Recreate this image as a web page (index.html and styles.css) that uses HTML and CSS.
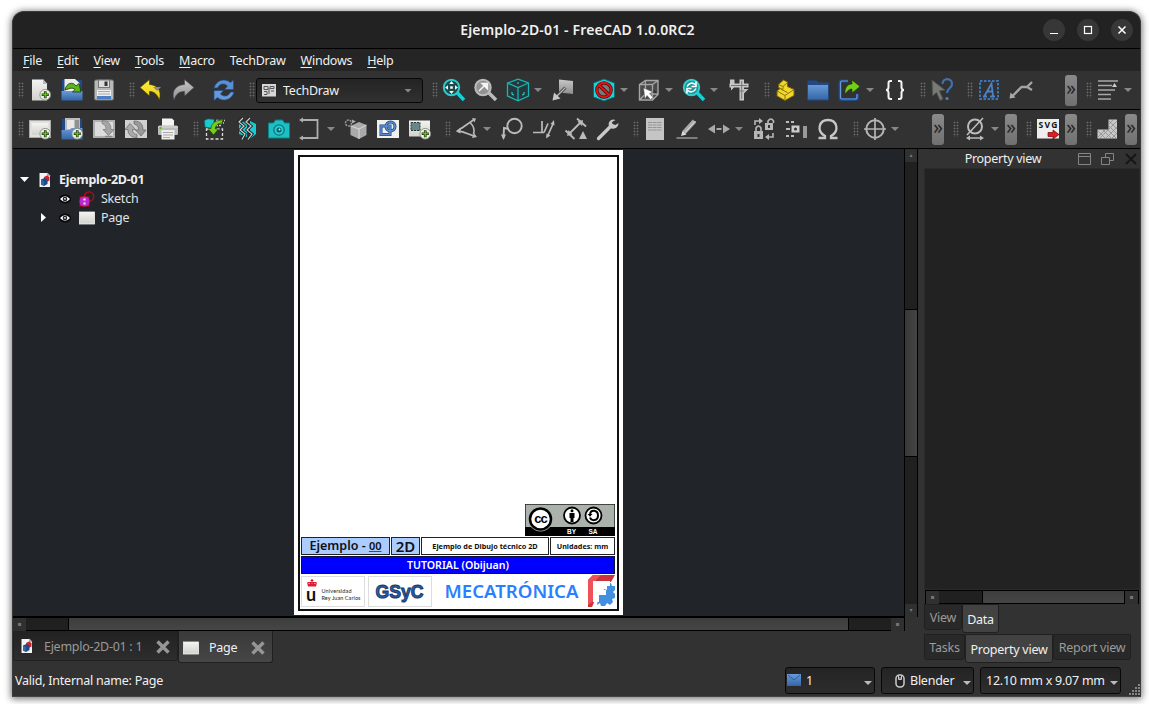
FILE: index.html
```html
<!DOCTYPE html>
<html lang="en">
<head>
<meta charset="utf-8">
<title>Ejemplo-2D-01 - FreeCAD 1.0.0RC2</title>
<link rel="stylesheet" href="styles.css">
</head>
<body>
<svg class="defs" width="0" height="0">
  <defs>
    <linearGradient id="gy" x2="0" y2="1"><stop stop-color="#fce94f"/><stop offset="1" stop-color="#edd400"/></linearGradient>
    <linearGradient id="gb" x2="0" y2="1"><stop stop-color="#6a9bd8"/><stop offset="1" stop-color="#3465a4"/></linearGradient>
    <linearGradient id="gw" x2="0" y2="1"><stop stop-color="#f4f4f2"/><stop offset="1" stop-color="#d0d2cc"/></linearGradient>
    <linearGradient id="gg" x2="0" y2="1"><stop stop-color="#c8c8c8"/><stop offset="1" stop-color="#8e8e8e"/></linearGradient>
    <symbol id="plus" viewBox="0 0 14 14"><circle cx="7" cy="7" r="6" fill="#eef0ec" stroke="#888a85" stroke-width="1"/><path d="M7 3v8M3 7h8" stroke="#173604" stroke-width="3"/><path d="M7 3.600v6.800M3.600 7h6.800" stroke="#73d216" stroke-width="1.300"/></symbol>
    <symbol id="doc" viewBox="0 0 12 16"><path d="M.5 1h8L11 3.500V15H.5z" fill="#f4f4f4"/><path d="M8 .5l3.500 3.500H8z" fill="#aaa"/><path d="M5 5l3-1.500 2.500 1.500v3.500l-3 1.500-2.500-2z" fill="#d4202a"/><path d="M2 7.500l3.500-1.500L8.500 7.500v4.500l-3.500 2-3-1.500z" fill="#204a87"/><path d="M2 7.500L5 9v5l-3-1.500z" fill="#3465a4"/></symbol>
    <symbol id="eye" viewBox="0 0 12 10"><ellipse cx="6" cy="5" rx="6" ry="4.500" fill="#08090a"/><path d="M1 5q5-5.500 10 0q-5 5.500-10 0z" fill="#fff"/><circle cx="6" cy="5" r="2.300" fill="#222"/><circle cx="6" cy="4.800" r=".9" fill="#fff"/></symbol>
    <symbol id="pageicon" viewBox="0 0 16 14"><rect x=".5" y="1" width="15" height="12" fill="url(#gw)" stroke="#f4f4f4" stroke-width=".8"/></symbol>
    <symbol id="close" viewBox="0 0 14 14"><path d="M1.500 1.500l11 11M12.500 1.500l-11 11" stroke="#969696" stroke-width="3.400"/></symbol>
  </defs>
</svg>
<div class="window">
  <header class="titlebar">
    <span class="title">Ejemplo-2D-01 - FreeCAD 1.0.0RC2</span>
    <div class="winbtns">
      <span class="wb"><svg width="10" height="10"><path d="M1 8.500h8" stroke="#fff" stroke-width="1.200"/></svg></span>
      <span class="wb"><svg width="10" height="10"><rect x="1.500" y="1.500" width="7" height="7" fill="none" stroke="#fff" stroke-width="1.200"/></svg></span>
      <span class="wb"><svg width="10" height="10"><path d="M1.500 1.500l7 7M8.500 1.500l-7 7" stroke="#fff" stroke-width="1.500"/></svg></span>
    </div>
  </header>
  <nav class="menu">
    <span><u>F</u>ile</span><span><u>E</u>dit</span><span><u>V</u>iew</span><span><u>T</u>ools</span><span><u>M</u>acro</span><span>TechDraw</span><span><u>W</u>indows</span><span><u>H</u>elp</span>
  </nav>

  <div class="toolbar">
    <i class="grip first"></i>
    <svg class="ic" viewBox="0 0 24 24"><path d="M4 1.500h11l4 4v17H4z" fill="url(#gw)"/><path d="M15 1l4 5h-4z" fill="#b8b9b5"/><use href="#plus" x="11" y="10.500" width="12.500" height="12.500"/></svg>
    <svg class="ic" viewBox="0 0 24 24"><path d="M2 2h20v20H2z" fill="#204a87"/><path d="M4.500 1h10.500l4.500 4v9h-15z" fill="#eee"/><path d="M1.500 13h21v9.500h-21z" fill="url(#gb)"/><path d="M5 12c1-7 8-9 11-4l3-2.500 2 8.500h-8.500l2.500-2.500c-3-2.500-5-1-10 .5z" fill="#5cb61a" stroke="#173604" stroke-width=".8"/></svg>
    <svg class="ic" viewBox="0 0 24 24"><rect x="2.500" y="2" width="19" height="20" rx="1.500" fill="#b8b8b8" stroke="#777"/><rect x="6.500" y="2" width="11" height="7.500" fill="#ddd" stroke="#777"/><rect x="12.500" y="3.500" width="3" height="4.500" fill="#333"/><rect x="5" y="12" width="14" height="9" fill="#eee"/><path d="M6 13.500h12M6 16h12" stroke="#aaa"/><path d="M5 18h14v3H5z" fill="#4a7fc4"/></svg>
    <i class="grip"></i>
    <svg class="ic" viewBox="0 0 24 24"><path d="M1 9.500L10.500 1.500v5C18 7 23 12 20.500 22 18 16 15 13.500 10.500 13.500V18z" fill="url(#gy)" stroke="#4b4205" stroke-width=".7"/><path d="M14 9h8l-4 4z" fill="#8b8b8b"/></svg>
    <svg class="ic" viewBox="0 0 24 24"><path d="M23 9.500L13.500 1.500v5C5 7 0 13 3 22 5.500 15.500 8 13.500 13.500 13.500V18z" fill="url(#gg)" stroke="#444" stroke-width=".6"/></svg>
    <svg class="ic sep" viewBox="0 0 24 24"><path d="M2 10C4 2 13-.5 18.500 4.500L21.500 2v9.500H12.500l3-3.500c-4-3.500-8-2-10 2z" fill="#5b8fd3" stroke="#204a87" stroke-width=".7"/><path d="M22 14c-2 8-11 10.500-16.500 5.500L2 22.500V12.500h9.500l-3 3.500c4 3.500 8 2 10-2z" fill="#6699d8" stroke="#204a87" stroke-width=".7"/></svg>
    <i class="grip"></i>
    <div class="workbench"><svg width="14" height="13" viewBox="0 0 14 13"><rect width="14" height="12.500" fill="#d6d6d6"/><path d="M2 2.500h4v3H2zM8 2.500h4v2H8zM2 7.500h3v3H2M7 4v6M9 7h3" fill="none" stroke="#555"/></svg><span>TechDraw</span><b class="tri"></b></div>
    <i class="grip"></i>
    <svg class="ic" viewBox="0 0 24 24"><path d="M15 14.500l7 7.500" stroke="#16d0d2" stroke-width="3.500"/><circle cx="9.500" cy="9.500" r="7.700" fill="#20494c" stroke="#2cc9cb" stroke-width="2"/><path d="M9.500 3l2.300 3H7.200zM9.500 16l2.300-3H7.200zM3 9.500l3-2.300v4.600zM16 9.500l-3-2.300v4.600zM8.200 8.200h2.600v2.600H8.200z" fill="#e8ffff"/></svg>
    <svg class="ic" viewBox="0 0 24 24"><path d="M14.500 14.500l7.500 7.500" stroke="#bbb" stroke-width="3.500"/><circle cx="9" cy="9.500" r="7.700" fill="#929292" stroke="#bbb" stroke-width="2"/><path d="M5 13l5-5M8 5.500h5.500V11z" stroke="#f4f4f4" fill="#f4f4f4" stroke-width="1.500"/></svg>
    <svg class="ic" viewBox="0 0 24 24"><path d="M12 1.200L22.500 5v13L12 22.800 1.500 18V5zM1.500 5L12 9.500 22.500 5M12 9.500v13.300" fill="#24393a" stroke="#18b4b7" stroke-width="1.300"/><path d="M12 4v2M6 14v2.500l2 .5M18 14v2.500l-2 .5" stroke="#32dde0" fill="none"/></svg>
    <b class="tri"></b>
    <svg class="ic" viewBox="0 0 24 24"><path d="M8 1.500l14 1.500v13L8 14.500z" fill="url(#gg)"/><path d="M14.500 9.500L6 18" stroke="#3c3c3c" stroke-width="3"/><path d="M14.500 9.500L6 18" stroke="#bbb" stroke-width="1.300"/><path d="M1.500 22.500l1.500-8 6.500 6z" fill="#c8c8c8"/></svg>
    <svg class="ic sep" viewBox="0 0 24 24"><path d="M12 1l10.500 4v14L12 23 1.500 19V5z" fill="#19d4dc" stroke="#0a6c70"/><circle cx="12" cy="12" r="7.200" fill="#707c7d" stroke="#550000" stroke-width="3.200"/><path d="M7 7l10 10" stroke="#550000" stroke-width="3.600"/><circle cx="12" cy="12" r="7.200" fill="none" stroke="#e01212" stroke-width="1.900"/><path d="M7 7l10 10" stroke="#e01212" stroke-width="2.200"/></svg>
    <b class="tri"></b>
    <svg class="ic" viewBox="0 0 24 24"><path d="M2.500 6.500l6-4h12.500v14l-5.500 5.500h-13zM2.500 6.500h13v15.500M15.500 6.500L21 2.500M8.500 2.500v13.500H21M8.500 16l-6 6" fill="#4a4a4a" stroke="#a5a5a5" stroke-width="1.400"/><path d="M6.500 10l9.500 4-3.500 1.500 3.500 4-2.500 2-3.500-4-2 3.500z" fill="#fff" stroke="#555" stroke-width=".5"/></svg>
    <b class="tri"></b>
    <svg class="ic" viewBox="0 0 24 24"><path d="M15 14.500l7 7.500" stroke="#16d0d2" stroke-width="3.500"/><circle cx="9.500" cy="9.500" r="7.700" fill="#209496" stroke="#2ccfd1" stroke-width="2"/><path d="M5 8.500c2-4 6-4 8-2M14 3.500v5H9.500M14 10.500c-2 4-6 4-8 2M5 15.500v-5h4.500" stroke="#fff" stroke-width="1.600" fill="none"/></svg>
    <b class="tri"></b>
    <svg class="ic" viewBox="0 0 24 24"><path d="M3 1.500h4.500v4h5V1.500H17v4h4.500v4H17v13h-4.500v-13H7l-3 3v-3H2.500v-4H3z" fill="#c6c6c6"/><path d="M14.700 3v18M4 7.500h16M12.500 13H17" fill="none" stroke="#777"/><path d="M17 11h4.500L17 15.500z" fill="#bbb"/></svg>
    <i class="grip"></i>
    <svg class="ic" viewBox="0 0 24 24"><path d="M4.500 6.500L9.500 2l4 2v4.500l6.500 3v6L11 22.500 3 18v-5l3-2.500-1.500-1z" fill="#f1d72d" stroke="#756405"/><path d="M4.500 6.500l4.500 2 4.500-4M9 8.500v3L4.500 9.500M3 13l8 4.500 9-6M11 17.500v5M6.500 11l7 3.500" fill="none" stroke="#8b7708"/></svg>
    <svg class="ic" viewBox="0 0 24 24"><path d="M1.500 2.500h9l2 2h10v8h-21z" fill="#204a87"/><path d="M1.500 6.500h21V22h-21z" fill="url(#gb)" stroke="#204a87"/></svg>
    <svg class="ic" viewBox="0 0 24 24"><path d="M10 3H3q-1 0-1 1.500v15q0 2 2 2h13.500q2 0 2-2V16" fill="none" stroke="#204a87" stroke-width="3"/><path d="M10 3H4q-1.500 0-1.500 1.500v15q0 1.500 1.500 1.500h13q2 0 2-2v-3" fill="none" stroke="#6a9bd8" stroke-width="1.200"/><path d="M7 16c-.5-7 3-10 7-10V2l8 6.500-8 6.500v-4c-3 0-4.500 2-7 5z" fill="#72ce18" stroke="#173604" stroke-width=".6"/></svg>
    <b class="tri"></b>
    <svg class="ic" viewBox="0 0 24 24"><path d="M9 3H7.500Q5.500 3 5.500 5v4q0 3-2.500 3 2.500 0 2.500 3v4q0 2 2 2H9M15 3h1.500q2 0 2 2v4q0 3 2.500 3-2.500 0-2.500 3v4q0 2-2 2H15" fill="none" stroke="#f4f4f4" stroke-width="2"/></svg>
    <i class="grip"></i>
    <svg class="ic" viewBox="0 0 24 24"><path d="M2 2l13 10-5.500 1 3.500 8-3 1.500-3.500-8L2.500 18z" fill="#777a76" stroke="#4c4f4b"/><path d="M12.500 6c0-6.500 9.500-6.500 9.500 0 0 4.500-5 4-5 9" fill="none" stroke="#4072b0" stroke-width="2.200"/><circle cx="17" cy="20.500" r="1.600" fill="#4d80be"/></svg>
    <i class="grip"></i>
    <svg class="ic" viewBox="0 0 24 24"><rect x="3" y="3" width="18" height="18" fill="none" stroke="#3b75bb" stroke-width="2" stroke-dasharray="2.500 1.500"/><path d="M6 18.500h4M13 18.500h5M7.500 18L14.500 5.500 16 18M10 13.500h5.500" fill="none" stroke="#4b83c6" stroke-width="1.800"/></svg>
    <svg class="ic" viewBox="0 0 24 24"><path d="M3.500 18L12.500 9h5.500l5-5M18 9l5 3" fill="none" stroke="#a5a5a5" stroke-width="2.300"/><path d="M.5 20.500l1-6 5 5z" fill="#aaa"/></svg>
    <span class="ext push">»</span>
    <i class="grip"></i>
    <svg class="ic" viewBox="0 0 24 24"><path d="M2 3h20M2 7.500h14M2 12h17M2 16.500h13M2 21h13" stroke="#a9a9a9" stroke-width="1.700"/><path d="M16 9l2.500-4L21 9z" fill="#ccc"/></svg>
    <b class="tri"></b>
  </div>

  <div class="toolbar">
    <i class="grip first"></i>
    <svg class="ic" viewBox="0 0 24 24"><rect x="1.500" y="3.500" width="21" height="17" fill="#e0e1dd" stroke="#aaa"/><rect x="4" y="6" width="16" height="12" fill="url(#gw)"/><use href="#plus" x="11" y="10.500" width="12.500" height="12.500"/></svg>
    <svg class="ic" viewBox="0 0 24 24"><path d="M2 2h20v20H2z" fill="#204a87"/><path d="M5 1h15v12H5z" fill="#bbb"/><path d="M7 3h7v9H7z" fill="#e8e8e8"/><path d="M16 3v9M18 3v9" stroke="#666"/><path d="M1.500 13h8l2-2h11v11.500h-21z" fill="url(#gb)"/><use href="#plus" x="11" y="10.500" width="12.500" height="12.500"/></svg>
    <svg class="ic" viewBox="0 0 24 24"><rect x="1" y="3" width="22" height="18" fill="#b0b0b0"/><rect x="3" y="5" width="18" height="14" fill="#dcdcdc"/><path d="M10 3.500c7 0 9 4 9 9h3L16.500 18.500 11 12.500h3c0-3-1-5-4-6z" fill="#a5a5a5" stroke="#777" stroke-width=".7"/><path d="M13 19.500h7" stroke="#888" stroke-width="1.500"/></svg>
    <svg class="ic" viewBox="0 0 24 24"><rect x="1" y="3" width="22" height="18" fill="#d0d0d0"/><path d="M10 4c7 0 9 4 9 9h3l-5 6-5.500-6h3c0-3-1-5-4.500-6z" fill="#999" stroke="#666" stroke-width=".7"/><path d="M13 20.500c-6 0-9-3-9-8H1l5-6 5.500 6h-3c0 3 1 4.500 4.500 5z" fill="#aaa" stroke="#666" stroke-width=".7"/></svg>
    <svg class="ic" viewBox="0 0 24 24"><path d="M6 1.500h10l2 2V11H6z" fill="#f4f4f4"/><rect x="2" y="8.500" width="20" height="9.500" rx="1.500" fill="#bbbcb8"/><path d="M2 10h20" stroke="#ddd"/><circle cx="4.500" cy="11" r="1.200" fill="#62bc19"/><rect x="5.500" y="13" width="13" height="9.500" fill="#eee"/><path d="M7 15.500h10M7 18h10M7 20.500h7" stroke="#aaa"/></svg>
    <i class="grip"></i>
    <svg class="ic" viewBox="0 0 24 24"><path d="M1.500 3.500L5 2l6 .5V8l-3 3-6-1z" fill="#19cbd0" stroke="#087a80" stroke-width=".6"/><path d="M13 3.500h9M12 6h9M12 8.500h6" stroke="#ccc" stroke-width="1.500" stroke-dasharray="3 1"/><rect x="3.500" y="12" width="16" height="10" fill="none" stroke="#ddd" stroke-width="1.300" stroke-dasharray="3 2"/><path d="M19.500 3C13 3 8 6 8 11.500H5L10.500 18 15.500 12h-3C12 9 15 6 19.500 6z" fill="#72ce18" stroke="#173604" stroke-width=".6"/></svg>
    <svg class="ic" viewBox="0 0 24 24"><path d="M4 7l8-4v17l-8-3zM15 4l6 3v10l-6 5z" fill="#18cbd0"/><path d="M8 1L4 5l5 4-4 4 5 4-3 5.500M15 1l-4 4 5 4-4 4 5 4-4 5.500" fill="none" stroke="#222" stroke-width="3"/><path d="M8 1L4 5l5 4-4 4 5 4-3 5.500M15 1l-4 4 5 4-4 4 5 4-4 5.500" fill="none" stroke="#ccc" stroke-width="1.200"/></svg>
    <svg class="ic" viewBox="0 0 24 24"><path d="M1.500 6h5l2-3h7l2 3h5v15h-21z" fill="#1dbfc4" stroke="#078488"/><circle cx="12" cy="13" r="5.800" fill="#10777b"/><circle cx="12" cy="13" r="4.500" fill="#20ced3"/><circle cx="12" cy="13" r="2.500" fill="#0e5a60"/><circle cx="12.500" cy="12.500" r="1" fill="#a2ffff"/></svg>
    <svg class="ic" viewBox="0 0 24 24"><path d="M3 3h15.500v18H3" fill="none" stroke="#adadad" stroke-width="1.800"/><path d="M0 3l4-2.500v5zM0 21l4-2.500v5z" fill="#adadad"/></svg>
    <b class="tri"></b>
    <svg class="ic" viewBox="0 0 24 24"><path d="M6.500 9L15 5l7.500 3v10L15 22l-8.500-4z" fill="#aaa"/><path d="M6.500 9L15 12l7.500-4M15 12v10" stroke="#e4e4e4" fill="none" stroke-width=".8"/><circle cx="4.500" cy="6" r="3" fill="none" stroke="#999" stroke-width="1.500" stroke-dasharray="2 1"/><path d="M8 2.500l4 2-4 2" fill="#aaa"/></svg>
    <svg class="ic" viewBox="0 0 24 24"><rect x="1" y="3" width="22" height="18" fill="#f0f0ee"/><g fill="none" stroke="#204a87" stroke-width="3"><rect x="5" y="9" width="9" height="8.500"/><circle cx="14.500" cy="9.500" r="4.500"/></g><g fill="none" stroke="#5b8fd3" stroke-width="1.500"><rect x="5" y="9" width="9" height="8.500"/><circle cx="14.500" cy="9.500" r="4.500"/></g></svg>
    <svg class="ic" viewBox="0 0 24 24"><rect x="1" y="3.500" width="21" height="16" fill="url(#gw)"/><rect x="3" y="5.500" width="9" height="8" fill="#618989" stroke="#333" stroke-dasharray="2 1"/><use href="#plus" x="11" y="10.500" width="12.500" height="12.500"/></svg>
    <i class="grip"></i>
    <svg class="ic" viewBox="0 0 24 24"><path d="M18.500 3L3 13.500l16.500 5.500M7 11l12-8.500M7 14.500l13 5M15.500 6q5 5 3 11" fill="none" stroke="#bababa" stroke-width="1.600"/><path d="M17 1l4 .5-1.500 4zM17 21l5-1-3-4zM1 14.500l4.500-4v6z" fill="#bababa"/></svg>
    <b class="tri"></b>
    <svg class="ic" viewBox="0 0 24 24"><circle cx="14.500" cy="9" r="7.200" fill="none" stroke="#bbb" stroke-width="1.900"/><path d="M9 12l-5-1-.5 10" fill="none" stroke="#bbb" stroke-width="1.900"/><path d="M1 17.500h5L3.500 23z" fill="#bbb"/></svg>
    <svg class="ic" viewBox="0 0 24 24"><path d="M1 15.500h11M10 4v11.500M12 15.500l4-9M16 18l5-11" fill="none" stroke="#bbb" stroke-width="1.700"/><path d="M14 21.500l.5-5 4 2zM18.500 7l3.500-4 .5 5.500z" fill="#bbb"/></svg>
    <svg class="ic" viewBox="0 0 24 24"><path d="M5 17L17 5M13 1.500l9 8M1.500 13.500l9 8.500" stroke="#bbb" stroke-width="1.800"/><path d="M3 19l1.500-6 4 4.500zM19 3l-5.500 1.500L18 9zM15 22l4-8 4 8z" fill="#bbb"/></svg>
    <svg class="ic" viewBox="0 0 24 24"><path d="M2.500 21.500L14 10" stroke="#c9c9c9" stroke-width="3.300" stroke-linecap="round"/><path d="M19.500 3c-4-2-8 2-6.500 6l2.500 2.500c4 1 7-2 7-5.500l-3 2-3-1-.500-2z" fill="#c9c9c9"/></svg>
    <i class="grip"></i>
    <svg class="ic" viewBox="0 0 24 24"><rect x="3" y="1" width="18" height="22" fill="#c5c5c5"/><path d="M5 5.500h14M5 8h14M5 10.500h14M5 13h14" stroke="#888" stroke-width=".8" stroke-dasharray="4 .6"/></svg>
    <svg class="ic" viewBox="0 0 24 24"><path d="M1.500 21h21" stroke="#999" stroke-width="1.500"/><path d="M19.500 4L9 15.500" stroke="#aaa" stroke-width="4.500"/><path d="M20.500 4L10 15.500" stroke="#ddd" stroke-width="1"/><path d="M6 19l1.500-5 4 3.500z" fill="#ddd"/></svg>
    <svg class="ic" viewBox="0 0 24 24"><path d="M1 12l7-4.500v9zM23 12l-7-4.500v9z" fill="#aaa"/><path d="M9.500 12h5" stroke="#aaa" stroke-width="2"/></svg>
    <b class="tri"></b>
    <svg class="ic" viewBox="0 0 24 24"><g fill="#b7b7b7"><path d="M2 14h9v8H2zM13 6h8v7h-8z"/></g><path d="M4 14v-3q2.500-4 5 0v3M16 6V4q3-4 5.500 0v2M3 8V4h5M21 16v4h-5" fill="none" stroke="#b7b7b7" stroke-width="1.600"/><path d="M7 1l4 3-4 3zM17 17l-4 3 4 3z" fill="#b7b7b7"/><path d="M6.500 17v3M17 8v3" stroke="#333" stroke-width="2"/></svg>
    <svg class="ic" viewBox="0 0 24 24"><rect x="7.500" y="8.500" width="8" height="7" fill="#ccc"/><circle cx="11.500" cy="12" r="1.500" fill="#333"/><path d="M2 5h10M2 19h10" stroke="#bbb" stroke-width="2" stroke-dasharray="3 2"/><rect x="19" y="9" width="4" height="12" fill="#999"/><path d="M2 12h4" stroke="#bbb" stroke-width="2"/></svg>
    <svg class="ic" viewBox="0 0 24 24"><path d="M2.500 21h6.500v-2C0 14 3 3 12 3s12 11 3 16v2h6.500" fill="none" stroke="#c7c7c7" stroke-width="2.300"/></svg>
    <i class="grip"></i>
    <svg class="ic" viewBox="0 0 24 24"><circle cx="12" cy="12" r="8.700" fill="none" stroke="#b5b5b5" stroke-width="2"/><path d="M12 1v22M1 12h22" stroke="#b5b5b5" stroke-width="1.700"/></svg>
    <b class="tri"></b>
    <span class="ext push2">»</span>
    <i class="grip"></i>
    <svg class="ic" viewBox="0 0 24 24"><circle cx="12" cy="9.500" r="7" fill="none" stroke="#bbb" stroke-width="2"/><path d="M20 1L4 18M5 21h14" stroke="#bbb" stroke-width="1.600"/><path d="M3 21l4-2.500v5zM21 21l-4-2.500v5z" fill="#bbb"/></svg>
    <b class="tri"></b>
    <span class="ext">»</span>
    <i class="grip"></i>
    <svg class="ic" viewBox="0 0 24 24"><rect x="1" y="2" width="22" height="19.500" fill="#eee"/><text x="12" y="10.500" text-anchor="middle" class="svgtext" textLength="19">SVG</text><path d="M12 15.500h5v-2.500l6 4.500-6 4.500v-2.500h-5z" fill="#e01b24" stroke="#700" stroke-width=".7"/></svg>
    <span class="ext">»</span>
    <i class="grip"></i>
    <svg class="ic" viewBox="0 0 24 24"><path d="M12.500 2.500h8.500v19H1.500v-9h11z" fill="#c8c8c8"/><path d="M13 4l8 8M13 9l8 8M2 14l7.500 7.500M7 13l8.500 8.500M12 13l8.500 8.500M21 4L4 21M21 10L10 21M21 16l-5 5M9 13l-7 7M17 3l-4 4" stroke="#8c8c8c" stroke-width=".8"/></svg>
    <span class="ext">»</span>
  </div>

  <main class="work">
    <section class="central">
      <div class="viewrow">
        <div class="view">
          <div class="tree">
            <div class="row root"><b class="down"></b><svg class="d" width="12" height="16"><use href="#doc"/></svg><strong>Ejemplo-2D-01</strong></div>
            <div class="row"><b class="noarrow"></b><svg width="12" height="10"><use href="#eye"/></svg><svg class="obj" width="16" height="16"><circle cx="10" cy="5.500" r="4.700" fill="none" stroke="#c00814" stroke-width="1.300"/><rect x="1" y="6" width="9" height="9" fill="#c22bd1" stroke="#c00"/><circle cx="5.500" cy="10.500" r="5" fill="#ba29d0"/><path d="M4.500 7.500h2v2h-2zM4.500 11.500h2v2h-2z" fill="#eee"/></svg><span>Sketch</span></div>
            <div class="row"><b class="right"></b><svg width="12" height="10"><use href="#eye"/></svg><svg class="obj" width="16" height="14"><use href="#pageicon"/></svg><span>Page</span></div>
          </div>
          <div class="sheet"><div class="frame">
            <svg class="cc" viewBox="0 0 90 32"><path d="M0 0h90v32H0z" fill="#aab2ab" stroke="#222" stroke-width="1.500"/><path d="M0 23h90v9H0z" fill="#000"/><circle cx="15.500" cy="15" r="12.500" fill="#aab2ab"/><circle cx="15.500" cy="15" r="10.500" fill="#fff" stroke="#000" stroke-width="2.500"/><text x="15.500" y="19" text-anchor="middle" class="cctext">cc</text><circle cx="47" cy="11.500" r="8" fill="#fff" stroke="#000" stroke-width="1.800"/><circle cx="47" cy="6.700" r="1.500"/><path d="M44.500 9h5v5h-1v4h-3v-4h-1z"/><circle cx="68.500" cy="11.500" r="8" fill="#fff" stroke="#000" stroke-width="1.800"/><path d="M65 10c1-5 8-4 8 1.500s-6.500 6-8 2" fill="none" stroke="#000" stroke-width="2"/><path d="M62.500 10h5L65 12.700z"/><text x="46.500" y="30.300" text-anchor="middle" class="cclabel">BY</text><text x="68" y="30.300" text-anchor="middle" class="cclabel">SA</text></svg>
            <div class="cells"><div class="c1">Ejemplo - <span>00</span></div><div class="c2">2D</div><div class="c3">Ejemplo de Dibujo técnico 2D</div><div class="c4">Unidades: mm</div></div>
            <div class="tut">TUTORIAL (Obijuan)</div>
            <div class="logos">
              <svg class="lg" viewBox="0 0 64 31"><rect x=".5" y=".5" width="63" height="30" fill="#fff" stroke="#ddd"/><path d="M7 10.500h8l1-4-2.500 1.500-.5-2-2 1.500-2-1.500-.5 2-2.500-1.500z" fill="#dc1e35"/><path d="M11 3v4M6.500 6.500h9M9.500 4.500h3" stroke="#dc1e35" stroke-width="1.200"/><text x="5" y="25" class="uletter">u</text><text x="20.500" y="17" class="utext" textLength="30">Universidad</text><text x="20.500" y="24" class="utext" textLength="39">Rey Juan Carlos</text></svg>
              <svg class="lg" viewBox="0 0 64 31"><rect x=".5" y=".5" width="63" height="30" fill="#fff" stroke="#ddd"/><text x="7.500" y="22" class="gsyc" textLength="48" lengthAdjust="spacingAndGlyphs">GSyC</text></svg>
              <span class="mec">MECATRÓNICA</span>
              <svg class="fc" viewBox="0 0 27 32"><path d="M0 5L5 0h22l-4 7H7v18l-3 7H0z" fill="#cb333b"/><path d="M0 5L5 0h8L7 6v19l-7 5z" fill="#ee515a"/><path d="M11 18h4l1-4 3 1V9l4-1 1 3h3v4l-2 2 2 2v4l-3 1 1 3-3 3-3-2-2 3h-4l-1-3-3 2z" fill="#418fde"/><path d="M5 6h17v5H11v4h7v5h-7v7H5z" fill="#fff"/></svg>
            </div>
          </div></div>
        </div>
        <div class="vscroll"><i class="sb">▴</i><i class="vthumb"></i><i class="sb">▾</i></div>
      </div>
      <div class="hscroll"><i class="sb">▪</i><i class="hthumb"></i><i class="sb">▪</i></div>
      <div class="mditabs">
        <div class="mt off"><svg width="12" height="16"><use href="#doc"/></svg><span>Ejemplo-2D-01 : 1</span><svg width="14" height="14"><use href="#close"/></svg></div>
        <div class="mt on"><svg width="16" height="14"><use href="#pageicon"/></svg><span>Page</span><svg width="14" height="14"><use href="#close"/></svg></div>
      </div>
    </section>
    <aside class="dock">
      <div class="docktitle"><span>Property view</span>
        <svg width="60" height="14" fill="none" stroke="#858585"><path d="M1.500 1.500h12v11h-12zM1.500 4.500h12M24.500 5.500h8v7h-8zM28.500 5.500v-4h8v7h-4"/><path d="M49 2l10 10M59 2L49 12" stroke="#161616" stroke-width="2"/></svg></div>
      <div class="props"></div>
      <div class="phscroll"><i class="sb">▪</i><i class="pthumb"></i><i class="sb">▪</i></div>
      <div class="tabs t1"><span class="tab v">View</span><span class="tab sel da">Data</span></div>
      <div class="tabs t2"><span class="tab ta">Tasks</span><span class="tab sel pv">Property view</span><span class="tab rv">Report view</span></div>
    </aside>
  </main>
  <footer class="status">
    <span class="msg">Valid, Internal name: Page</span>
    <div class="sel1 combo"><svg width="14" height="13"><rect width="14" height="12" fill="url(#gb)"/><path d="M1 1l6 5 6-5" stroke="#2d5d9a" fill="none"/></svg><span>1</span><b class="tri"></b></div>
    <div class="sel2 combo"><svg width="10" height="14"><rect x="1" y="1" width="8" height="12" rx="3.500" fill="#222" stroke="#ccc" stroke-width="1.500"/><path d="M3.500 2v3.500h3V2M5 3v3" stroke="#ccc" fill="none"/></svg><span>Blender</span><b class="tri"></b></div>
    <div class="sel3 combo"><span>12.10 mm x 9.07 mm</span><b class="tri"></b></div>
    <svg class="resize" width="12" height="12" fill="#858585"><path d="M10 0h2v2h-2zM7 3h2v2H7zM10 3h2v2h-2zM4 6h2v2H4zM7 6h2v2H7zM10 6h2v2h-2zM1 9h2v2H1zM4 9h2v2H4zM7 9h2v2H7zM10 9h2v2h-2z"/></svg>
  </footer>
</div>
</body>
</html>
```
FILE: styles.css
```css
* { box-sizing: border-box; }
body { margin: 0; width: 1149px; height: 704px; overflow: hidden; background: #fff; font: 12.5px/18px "Noto Sans", sans-serif; letter-spacing: -.24px; color: #f0f0f0; display: flex; flex-direction: column; }
svg { display: block; flex: none; }
i, b { font-style: normal; flex: none; }
.window { width: 1129px; height: 686px; margin: 11px 0 0 12px; background: #323232; border-radius: 12px 12px 0 0; overflow: hidden; display: flex; flex-direction: column; border: 1px solid #3a3a3a; border-bottom-color: #454545; box-shadow: 0 1px 7px 1px rgba(0,0,0,.55); }

/* title and menu */
.titlebar { height: 37px; flex: none; background: #222; border-bottom: 1px solid #000; display: grid; grid-template-columns: 110px 1fr 110px; align-items: center; }
.title { grid-column: 2; text-align: center; font-weight: 600; font-size: 14px; padding-left: 2px; letter-spacing: .16px; }
.winbtns { display: flex; gap: 12px; justify-content: flex-end; padding-right: 7px; }
.wb { width: 22px; height: 22px; border-radius: 50%; background: #373737; display: grid; place-items: center; }
.menu { height: 22px; flex: none; background: #252525; display: flex; gap: 15px; padding: 3px 0 0 10px; }
.menu u { text-underline-offset: 2px; }

/* toolbars */
.toolbar { height: 39px; flex: none; display: flex; align-items: center; background: #323232; border-bottom: 1px solid #000; }
.ic { width: 24px; height: 24px; margin: 0 4px; }
.sep { margin-left: 13px; }
.grip { width: 6px; height: 16px; margin-left: 9px; background: radial-gradient(circle, #6a6a6a .8px, transparent 1.1px) 0 0 / 3px 3px; }
.grip.first { margin-left: 5px; }
.tri { width: 8px; height: 4px; margin-right: 5px; background: #888; clip-path: polygon(0 0, 100% 0, 50% 100%); }
.workbench { width: 167px; height: 25px; margin-left: 1px; border: 1px solid #080808; border-radius: 3px; background: linear-gradient(#242424, #303030); display: flex; align-items: center; padding: 1px 5px 0; gap: 7px; }
.workbench span { flex: 1; }
.ext { width: 12px; height: 31px; margin-left: 1px; border-radius: 3px; background: linear-gradient(#8a8a8a, #707070); color: #252525; font-size: 19px; letter-spacing: 0; line-height: 27px; display: flex; justify-content: center; }
.ext.push { margin-left: 28px; }
.ext.push2 { margin-left: 28px; }
.svgtext { font: 700 8.5px "Noto Sans", sans-serif; fill: #111; letter-spacing: 0; }

/* work area */
.work { height: 519px; flex: none; display: flex; }
.central { width: 905px; flex: none; }
.viewrow { display: flex; height: 468px; }
.view { width: 891px; display: flex; background: #212529; border-bottom: 1px solid #000; }
.tree { width: 281px; padding-top: 21px; flex: none; }
.row { display: flex; align-items: center; height: 19px; }
.down { width: 9px; height: 5px; margin: 0 10px 0 7px; background: #fff; clip-path: polygon(0 0, 100% 0, 50% 100%); }
.row .d { margin-right: 8px; }
.right { width: 5px; height: 9px; margin: 0 13px 0 28px; background: #fff; clip-path: polygon(0 0, 100% 50%, 0 100%); }
.noarrow { width: 46px; }
.obj { margin: 0 6px 0 8px; }
.row > span { color: #e2e2e2; }
.sheet { width: 329px; height: 465px; margin-top: 1px; background: #fff; padding: 5px 4px 4px; color: #111; letter-spacing: 0; }
.frame { width: 321px; height: 456px; border: 2px solid #111; padding: 0 2px 1px 1px; display: flex; flex-direction: column; justify-content: flex-end; }
.cc { width: 90px; height: 32px; align-self: flex-end; margin-bottom: 1px; }
.cctext { font: 700 13px "Liberation Sans", sans-serif; letter-spacing: -1px; }
.cclabel { font: 700 6.5px "Liberation Sans", sans-serif; fill: #fff; }
.cells { display: flex; gap: 1px; height: 19px; }
.cells > div { border: 1px solid #222; text-align: center; font-weight: 700; white-space: nowrap; line-height: 16px; height: 18px; }
.c1 { width: 89px; background: #aaccff; font-size: 12.5px; }
.c1 span { font-size: 11px; text-decoration: underline; text-decoration-color: #33f; text-decoration-thickness: 1px; }
.cells > .c1, .cells > .c2 { font-weight: 600; }
.c2 { width: 29px; background: #aaccff; font-size: 15px; }
.c3 { width: 128px; font-size: 7.300px; }
.c4 { flex: 1; font-size: 7.200px; }
.tut { height: 18px; background: #0000fe; color: #fff; border: 1px solid #113; font-weight: 600; font-size: 10.600px; line-height: 16px; text-align: center; }
.logos { display: flex; align-items: center; height: 34px; }
.lg { width: 64px; height: 31px; margin-right: 3px; }
.uletter { font: 700 18px Lato, sans-serif; fill: #111; }
.utext { font: 5.500px Lato, sans-serif; fill: #222; }
.gsyc { font: 700 19px "Liberation Sans", sans-serif; fill: #2f5fa5; stroke: #183567; stroke-width: 1px; }
.mec { flex: 1; text-align: center; color: #2a7fff; font-weight: 600; font-size: 18.600px; white-space: nowrap; }
.fc { width: 27px; height: 32px; }

/* scrollbars */
.sb { width: 13px; height: 13px; background: #303030; color: #777; font: 6px/12px "DejaVu Sans", sans-serif; text-align: center; }
.vscroll { width: 14px; height: 468px; border: solid #000; border-width: 0 1px 1px; background: #202020; display: flex; flex-direction: column; justify-content: space-between; }
.vscroll .sb { width: 12px; }
.vthumb { height: 148px; margin-top: 147px; margin-bottom: 147px; background: linear-gradient(90deg, #383838, #444); border: solid #000; border-width: 1px 0; }
.hscroll { width: 892px; height: 14px; border: 1px solid #000; border-left: 0; background: #202020; display: flex; justify-content: space-between; }
.hthumb { width: 781px; margin-right: 28px; margin-left: 28px; border: solid #000; border-width: 0 1px; background: linear-gradient(#3d3d3d, #464646); }

/* tabs */
.mditabs { display: flex; height: 37px; align-items: flex-start; }
.mt { display: flex; align-items: center; border: 1px solid #202020; border-top: 0; border-radius: 0 0 3px 3px; }
.mt.off { width: 165px; height: 30px; background: linear-gradient(#222, #2d2d2d); color: #999; padding: 3px 7px 0; }
.mt.off > svg:first-child { margin-top: -3px; }
.mt.off span { flex: 1; margin-left: 11px; white-space: nowrap; letter-spacing: -.28px; }
.mt.on { width: 95px; height: 32px; background: linear-gradient(#3a3a3a, #464646); padding: 2px 7px 0 4px; }
.mt.on span { flex: 1; margin-left: 10px; }
.dock { width: 222px; display: flex; flex-direction: column; padding-left: 6px; }
.docktitle { height: 19px; display: flex; flex: none; align-items: center; }
.docktitle span { flex: 1; text-align: center; padding-left: 5px; letter-spacing: -.28px; }
.docktitle svg { margin-right: 3px; }
.props { height: 422px; flex: none; background: #222; border: 1px solid #2a2a2a; }
.phscroll { height: 14px; flex: none; margin-left: 1px; margin-right: 1px; border: 1px solid #000; background: #202020; display: flex; }
.pthumb { flex: 1; margin-left: 43px; border: solid #000; border-width: 0 1px; background: linear-gradient(#3d3d3d, #464646); }
.tabs { display: flex; align-items: flex-start; height: 30px; flex: none; }
.tab { height: 26px; line-height: 25px; text-align: center; border: 1px solid #202020; border-radius: 0 0 3px 3px; background: #292929; color: #9b9b9b; white-space: nowrap; }
.tab.sel { height: 29px; line-height: 30px; background: #424242; color: #f0f0f0; }
.v { width: 38px; } .da { width: 37px; } .ta { width: 41px; } .pv { width: 88px; } .rv { width: 78px; }

/* status bar */
.status { flex: 1; display: flex; align-items: flex-start; }
.msg { flex: 1; padding: 4px 0 0 2px; }
.combo { height: 27px; margin-top: -1px; border: 1px solid #080808; border-radius: 3px; background: linear-gradient(#242424, #2d2d2d); display: flex; align-items: center; margin-right: 6px; gap: 5px; }
.combo span { flex: 1; white-space: nowrap; }
.combo .tri { background: #bbb; margin: 5px 2px 0 0; }
.sel1 { width: 90px; padding-left: 1px; }
.sel2 { width: 93px; padding-left: 13px; }
.sel3 { width: 141px; padding-left: 5px; margin-right: 7px; }
.resize { align-self: flex-end; }
```
